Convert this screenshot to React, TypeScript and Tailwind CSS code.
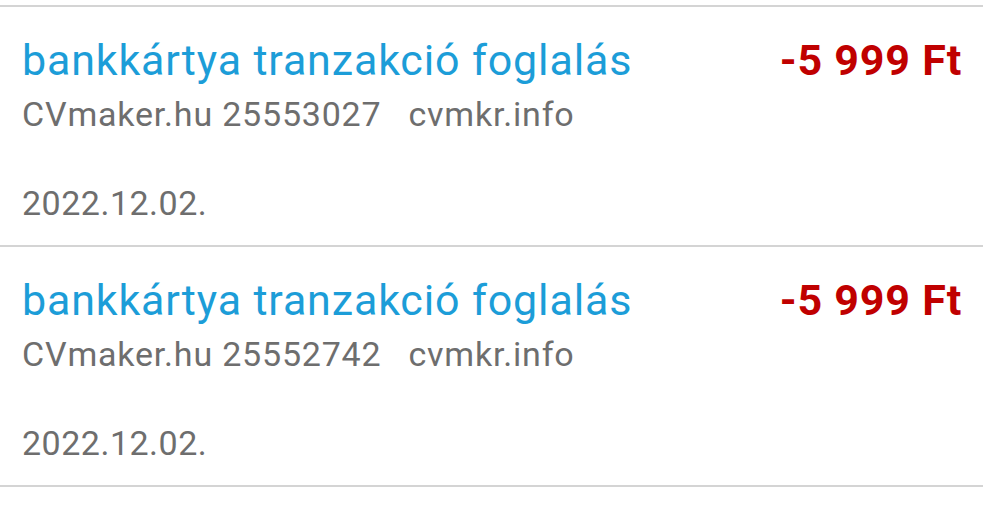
import React from "react";

const items = [
  { id: "25553027" },
  { id: "25552742" },
];

export default function App() {
  return (
    <div
      className="w-[983px] h-[518px] bg-white overflow-hidden pt-[5px]"
      style={{ fontFamily: "Roboto, 'Noto Sans', sans-serif" }}
    >
      {items.map((it) => (
        <div key={it.id} className="border-t-[2px] border-[#d4d4d4] h-[240px] pl-[22px] pr-[21px] pt-[29px]">
          <div className="flex justify-between items-center h-[48px]">
            <span className="text-[43px] leading-[48px] tracking-[0.85px] text-[#1c9dd8]">bankkártya tranzakció foglalás</span>
            <span className="text-[43px] leading-[48px] tracking-[0.8px] font-bold text-[#c00000]">-5 999 Ft</span>
          </div>
          <div className="h-[40px] mt-[10px] text-[34px] leading-[40px] tracking-[0.8px] text-[#6e6e6e] flex gap-[27px]">
            <span>CVmaker.hu {it.id}</span>
            <span>cvmkr.info</span>
          </div>
          <div className="h-[40px] mt-[49px] text-[34px] leading-[40px] tracking-[0.5px] text-[#6e6e6e]">2022.12.02.</div>
        </div>
      ))}
      <div className="border-t-[2px] border-[#d4d4d4]" />
    </div>
  );
}
